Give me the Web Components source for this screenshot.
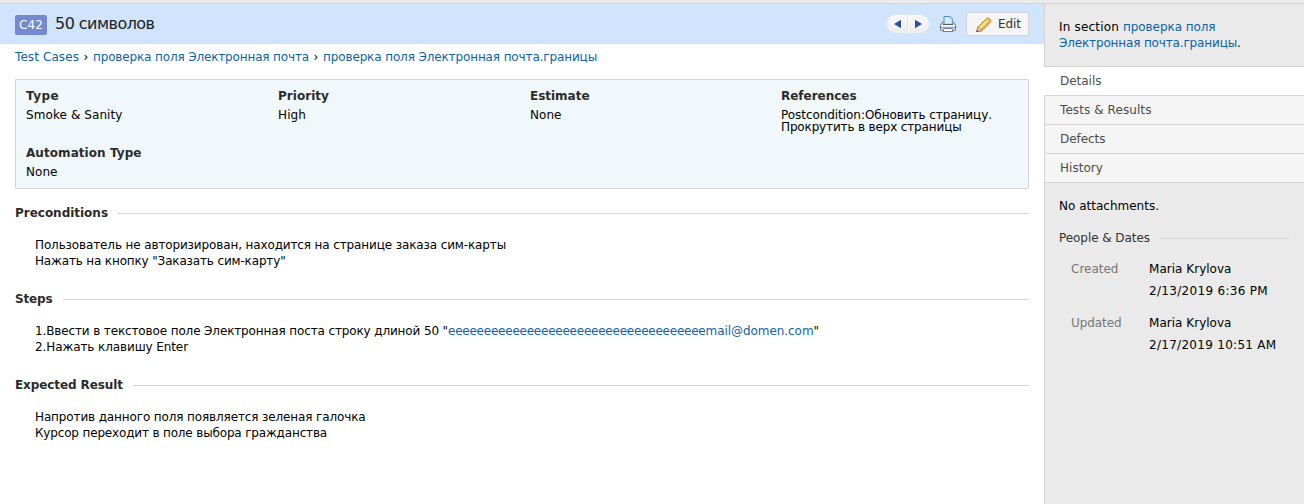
<!DOCTYPE html>
<html lang="ru">
<head>
<meta charset="utf-8">
<title>C42 50 символов</title>
<style>
html,body{margin:0;height:100%;overflow:hidden}
body{font:12px/16px "DejaVu Sans",Verdana,sans-serif;color:#000;background:#fff}
</style>
</head>
<body>
<case-page></case-page>
<script>
const define = (name, html, ready) => {
  const t = document.createElement('template');
  t.innerHTML = html;
  customElements.define(name, class extends HTMLElement {
    constructor() {
      super();
      this.attachShadow({mode: 'open'}).append(t.content.cloneNode(true));
    }
    connectedCallback() { if (ready) ready(this, this.shadowRoot); }
  });
};

/* One line of text, tracked to the advance width given in "w". */
define('text-run', `<style>:host{display:inline-block;white-space:pre;vertical-align:baseline}</style><slot></slot>`, el => {
  const w = parseFloat(el.getAttribute('w'));
  el.style.letterSpacing = '0px';
  const n = [...el.textContent].length;
  el.style.letterSpacing = ((w - el.getBoundingClientRect().width) / n).toFixed(4) + 'px';
});

define('app-link', `<style>:host{color:#0b63ad;display:inline}</style><slot></slot>`);

define('case-badge', `<style>:host{display:block;box-sizing:border-box;width:32px;height:20px;border-radius:2px;background:#7489cf;color:#fff;line-height:20px;padding-left:4px}</style><slot></slot>`);

define('nav-pager', `<style>:host{display:block;width:44px;height:20px}svg{display:block}</style>
<svg width="44" height="20" viewBox="0 0 44 20">
<defs><linearGradient id="g" x2="0" y2="1"><stop stop-color="#fbfbfb"/><stop offset="1" stop-color="#ececec"/></linearGradient></defs>
<rect x=".5" y=".5" width="43" height="19" rx="9.5" fill="url(#g)" stroke="#dfe3e8"/>
<path d="M21.5 1v18" stroke="#e0e2e4"/><path d="M22.5 1v18" stroke="#fff"/>
<path d="M8 10l7-4.2v8.4zM36 10l-7-4.2v8.4z" fill="#2b5297"/></svg>`);

define('print-icon', `<style>:host{display:block;width:16px;height:16px}svg{display:block}</style>
<svg width="16" height="16" viewBox="0 0 16 16">
<path d="M2.4 6.3h11.2l1.9 3v4.2q0 1-1 1h-13q-1 0-1-1V9.3z" fill="#dfe2e8" stroke="#656a78"/>
<path d="M4 8.3V.5h6.3l2 2v5.8z" fill="#d9edfc" stroke="#4c8fd0"/>
<path d="M10 .8v2h2" fill="#fff" stroke="#77ade0" stroke-width=".7"/>
<path d="M1.3 9.5h13.4" stroke="#fff"/>
<path d="M3 8.5h10" stroke="#4f5666"/>
<path d="M1 11.5h14" stroke="#a7abb5"/>
<path d="M3.5 12.5h9l.5 3H3z" fill="#f8f8f8" stroke="#767b87"/></svg>`);

define('pencil-icon', `<style>:host{display:block;width:16px;height:16px}svg{display:block}</style>
<svg width="16" height="16" viewBox="0 0 16 16">
<path d="M.8 14.6l1-4.6 8.8-8.6q1.3-1 2.6.1l1.3 1.3q1 1.2-.1 2.5l-8.8 8.6z" fill="#f0b440" stroke="#b98035" stroke-width=".9"/>
<path d="M2.8 10.4l8.6-8.4 1.6 1.6-8.6 8.4z" fill="#ffe79a"/>
<path d="M.8 14.6l1-4.4 3.6 3.5z" fill="#f8e6cf" stroke="#a0714a" stroke-width=".7"/>
<path d="M.5 15l.5-2.3 1.7 1.7z" fill="#4b3a30"/>
<path d="M10 2.4l3.4 3.4" stroke="#dca24a" stroke-width=".9"/></svg>`);

define('edit-button', `<style>:host{display:flex;box-sizing:border-box;width:63px;height:24px;border:1px solid #d4d4d4;border-radius:2px;background:#f5f5f5;color:#333;padding:4px 0 0 9px;gap:6px;line-height:14px}</style>
<pencil-icon></pencil-icon><span><slot></slot></span>`);

define('case-header', `<style>
:host{display:flex;box-sizing:border-box;height:40px;background:#d0e4fd;padding:8px 15px 0 15px;align-items:flex-start}
case-badge{margin-top:3px}h1{margin:2px 0 0 8px;font-size:16px;font-weight:400;line-height:20px;color:#222;flex:1}
nav-pager{margin:2px 10px 0 0}print-icon{margin:4px 10px 0 0}edit-button{margin-top:0}</style>
<case-badge><text-run w="24">C42</text-run></case-badge><h1><text-run w="99.5">50 символов</text-run></h1>
<nav-pager></nav-pager><print-icon></print-icon><edit-button><text-run w="23">Edit</text-run></edit-button>`);

define('bread-crumbs', `<style>:host{display:flex;box-sizing:border-box;padding:5px 15px 0;height:35px;line-height:16px}.s{width:14px;text-align:center}</style>
<app-link><text-run w="64">Test Cases</text-run></app-link><span class="s">›</span>
<app-link><text-run w="216">проверка поля Электронная почта</text-run></app-link><span class="s">›</span>
<app-link><text-run w="274">проверка поля Электронная почта.границы</text-run></app-link>`);

define('info-field', `<style>:host{display:block;line-height:12px}b{display:block;color:#2b2b2b;line-height:16px;margin-bottom:5px}</style>
<b><slot name="label"></slot></b><slot></slot>`);

define('info-grid', `<style>:host{display:grid;box-sizing:border-box;height:110px;margin:0 15px;border:1px solid #d4d6d8;border-radius:1px;background:#f0f8fc;grid-template-columns:252px 252px 251px 1fr;grid-template-rows:57px 1fr;padding:8px 10px}</style>
<info-field><text-run slot="label" w="33">Type</text-run><text-run w="96.5">Smoke &amp; Sanity</text-run></info-field>
<info-field><text-run slot="label" w="51">Priority</text-run><text-run w="28">High</text-run></info-field>
<info-field><text-run slot="label" w="59.5">Estimate</text-run><text-run w="31.5">None</text-run></info-field>
<info-field><text-run slot="label" w="75.5">References</text-run><text-run w="211">Postcondition:Обновить страницу.</text-run><br><text-run w="180.5">Прокрутить в верх страницы</text-run></info-field>
<info-field><text-run slot="label" w="115.5">Automation Type</text-run><text-run w="31.5">None</text-run></info-field>`);

define('case-section', `<style>:host{display:block;padding:0 15px;height:86px}
header{display:flex;align-items:center;gap:10px;font-weight:700;color:#2b2b2b;line-height:16px}
header::after{content:"";flex:1;height:1px;background:#d6d6d6;margin-top:1px}
div{padding:16px 20px}</style><header><slot name="title"></slot></header><div><slot></slot></div>`);

define('side-tab', `<style>:host{display:block;box-sizing:border-box;height:29px;padding:6px 15px 0;background:#f5f5f5;border-bottom:1px solid #d4d4d4;border-left:1px solid #d4d4d4;color:#4c4c4c}
:host([active]){background:#fff;border-left-color:#fff}</style><slot></slot>`);

define('date-row', `<style>:host{display:grid;grid-template-columns:78px 1fr;line-height:22px;margin-bottom:10px;padding-left:12px}.k{color:#777}</style>
<span class="k"><slot name="label"></slot></span><div><slot></slot></div>`);

define('side-bar', `<style>
:host{display:flex;flex-direction:column;background:#eaeaea}
.in{box-sizing:border-box;height:63px;padding:15px 14px 0;border-left:1px solid #d4d4d4;border-bottom:1px solid #d4d4d4}
.body{flex:1;border-left:1px solid #d4d4d4;padding:15px 15px 0 14px}
h2{display:flex;align-items:center;gap:10px;margin:16px 0 12px;font:inherit;color:#333}
h2::after{content:"";flex:1;height:1px;background:#d4d4d4;margin-top:1px}</style>
<div class="in"><text-run w="64">In section </text-run><app-link><text-run w="92.5">проверка поля</text-run></app-link><br><app-link><text-run w="178">Электронная почта.границы</text-run></app-link>.</div>
<side-tab active><text-run w="41.5">Details</text-run></side-tab>
<side-tab><text-run w="91.5">Tests &amp; Results</text-run></side-tab>
<side-tab><text-run w="45.5">Defects</text-run></side-tab>
<side-tab><text-run w="43">History</text-run></side-tab>
<div class="body"><text-run w="100">No attachments.</text-run>
<h2><text-run w="91">People &amp; Dates</text-run></h2>
<date-row><text-run slot="label" w="47.5">Created</text-run><text-run w="82.5">Maria Krylova</text-run><br><text-run w="119">2/13/2019 6:36 PM</text-run></date-row>
<date-row><text-run slot="label" w="50.5">Updated</text-run><text-run w="82.5">Maria Krylova</text-run><br><text-run w="127.5">2/17/2019 10:51 AM</text-run></date-row></div>`);

define('case-page', `<style>
:host{display:grid;box-sizing:border-box;height:504px;grid-template-rows:4px 1fr;grid-template-columns:1044px 1fr}
.top{grid-column:1/3;box-sizing:border-box;background:#eaeaea;border-bottom:1px solid #d4d4d4}
info-grid{margin-bottom:16px}</style>
<div class="top"></div>
<main><case-header></case-header><bread-crumbs></bread-crumbs><info-grid></info-grid>
<case-section><text-run slot="title" w="93">Preconditions</text-run><text-run w="471">Пользователь не авторизирован, находится на странице заказа сим-карты</text-run><br><text-run w="250.5">Нажать на кнопку "Заказать сим-карту"</text-run></case-section>
<case-section><text-run slot="title" w="37.5">Steps</text-run><text-run w="413">1.Ввести в текстовое поле Электронная поста строку длиной 50 "</text-run><app-link><text-run w="257.5">eeeeeeeeeeeeeeeeeeeeeeeeeeeeeeeeeeee</text-run><text-run w="108">mail@domen.com</text-run></app-link>"<br><text-run w="153">2.Нажать клавишу Enter</text-run></case-section>
<case-section><text-run slot="title" w="108">Expected Result</text-run><text-run w="330.5">Напротив данного поля появляется зеленая галочка</text-run><br><text-run w="292">Курсор переходит в поле выбора гражданства</text-run></case-section></main>
<side-bar></side-bar>`);
</script>
</body>
</html>
